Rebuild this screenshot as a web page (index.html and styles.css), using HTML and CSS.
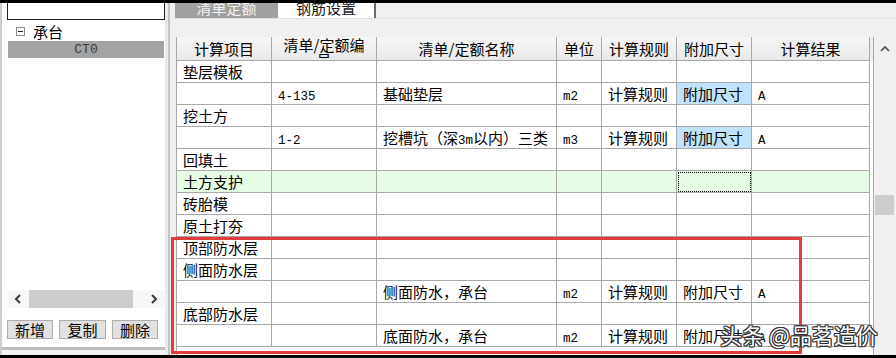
FILE: index.html
```html
<!DOCTYPE html>
<html lang="zh-CN">
<head>
<meta charset="utf-8">
<title>清单定额</title>
<link rel="stylesheet" href="styles.css">
</head>
<body>
<div class="app">
  <aside class="left">
    <div class="search"></div>
    <div class="tree-row"><span class="toggle"><span class="minus"></span></span><span class="tree-label">承台</span></div>
    <div class="tree-item">CT0</div>
    <div class="left-spacer"></div>
    <div class="hscroll">
      <div class="harrow"><svg width="8" height="10" viewBox="0 0 8 10"><polyline points="6,1 2,5 6,9" fill="none" stroke="#3a3a3a" stroke-width="2"/></svg></div>
      <div class="hthumb"></div>
      <div class="htrack"></div>
      <div class="harrow"><svg width="8" height="10" viewBox="0 0 8 10"><polyline points="2,1 6,5 2,9" fill="none" stroke="#3a3a3a" stroke-width="2"/></svg></div>
    </div>
    <div class="btns">
      <div class="btn">新增</div>
      <div class="btn w47">复制</div>
      <div class="btn">删除</div>
    </div>
    <div class="left-foot"></div>
  </aside>
  <div class="splitter"></div>
  <main class="right">
    <div class="tabs">
      <div class="tab active">清单定额</div>
      <div class="tab plain">钢筋设置</div>
    </div>
    <div class="tab-gap"></div>
    <div class="grid-wrap">
      <div class="grid">
        <div class="hd">计算项目</div>
        <div class="hd wrap">清单/定额编号</div>
        <div class="hd">清单/定额名称</div>
        <div class="hd">单位</div>
        <div class="hd">计算规则</div>
        <div class="hd">附加尺寸</div>
        <div class="hd">计算结果</div>

        <div class="c">垫层模板</div><div class="c"></div><div class="c"></div><div class="c"></div><div class="c"></div><div class="c"></div><div class="c"></div>

        <div class="c"></div><div class="c"><span class="mono">4-135</span></div><div class="c">基础垫层</div><div class="c"><span class="mono">m2</span></div><div class="c">计算规则</div><div class="c blue">附加尺寸</div><div class="c"><span class="mono">A</span></div>

        <div class="c">挖土方</div><div class="c"></div><div class="c"></div><div class="c"></div><div class="c"></div><div class="c"></div><div class="c"></div>

        <div class="c"></div><div class="c"><span class="mono">1-2</span></div><div class="c">挖槽坑（深<span class="mono">3m</span>以内）三类</div><div class="c"><span class="mono">m3</span></div><div class="c">计算规则</div><div class="c blue">附加尺寸</div><div class="c"><span class="mono">A</span></div>

        <div class="c">回填土</div><div class="c"></div><div class="c"></div><div class="c"></div><div class="c"></div><div class="c"></div><div class="c"></div>

        <div class="c green">土方支护</div><div class="c green"></div><div class="c green"></div><div class="c green"></div><div class="c green"></div><div class="c green focus"></div><div class="c green"></div>

        <div class="c">砖胎模</div><div class="c"></div><div class="c"></div><div class="c"></div><div class="c"></div><div class="c"></div><div class="c"></div>

        <div class="c">原土打夯</div><div class="c"></div><div class="c"></div><div class="c"></div><div class="c"></div><div class="c"></div><div class="c"></div>

        <div class="c">顶部防水层</div><div class="c"></div><div class="c"></div><div class="c"></div><div class="c"></div><div class="c"></div><div class="c"></div>

        <div class="c">侧面防水层</div><div class="c"></div><div class="c"></div><div class="c"></div><div class="c"></div><div class="c"></div><div class="c"></div>

        <div class="c"></div><div class="c"></div><div class="c">侧面防水，承台</div><div class="c"><span class="mono">m2</span></div><div class="c">计算规则</div><div class="c">附加尺寸</div><div class="c"><span class="mono">A</span></div>

        <div class="c">底部防水层</div><div class="c"></div><div class="c"></div><div class="c"></div><div class="c"></div><div class="c"></div><div class="c"></div>

        <div class="c"></div><div class="c"></div><div class="c">底面防水，承台</div><div class="c"><span class="mono">m2</span></div><div class="c">计算规则</div><div class="c">附加尺寸</div><div class="c"><span class="mono">A</span></div>
      </div>
      <div class="grid-fill"></div>
      <div class="vscroll">
        <div class="varrow"><svg width="10" height="7" viewBox="0 0 10 7"><polyline points="1,6 5,2 9,6" fill="none" stroke="#4a4a4a" stroke-width="1.6"/></svg></div>
        <div class="vthumb"></div>
      </div>
    </div>
  </main>
  <div class="highlight"></div>
  <div class="watermark">头条 @品茗造价</div>
</div>
</body>
</html>
```

FILE: styles.css
```css
html, body {
  margin: 0;
  padding: 0;
}
body {
  background: #000;
  width: 896px;
  height: 358px;
  overflow: hidden;
  font-family: "Noto Sans CJK SC", "Noto Sans", sans-serif;
  font-size: 15px;
  color: #000;
}
.app {
  position: relative;
  margin-top: 3px;
  height: 352px;
  display: flex;
  background: #f0f0f0;
}

/* left panel */
.left {
  width: 165px;
  box-sizing: border-box;
  border-left: 2px solid #cdcdcd;
  background: #fff;
  display: flex;
  flex-direction: column;
}
.search {
  margin-left: 5px;
  width: 158px;
  height: 17px;
  box-sizing: border-box;
  border: 1px solid #1e1e1e;
  border-top: none;
  background: #fff;
}
.tree-row {
  margin-top: 3px;
  height: 17px;
  display: flex;
  align-items: center;
}
.toggle {
  margin-left: 14px;
  width: 9px;
  height: 9px;
  box-sizing: border-box;
  border: 1px solid #8e8e8e;
  background: #fff;
  display: flex;
  align-items: center;
  justify-content: center;
}
.minus {
  width: 5px;
  height: 1px;
  background: #222;
}
.tree-label {
  margin-left: 8px;
  line-height: 17px;
}
.tree-item {
  margin-top: 1px;
  margin-left: 6px;
  width: 156px;
  height: 17px;
  line-height: 17px;
  background: #a3a3a3;
  color: #3a3a3a;
  text-align: center;
  font-family: "Liberation Mono", monospace;
  font-size: 13px;
}
.left-spacer {
  flex: 1;
}
.hscroll {
  margin-left: 5px;
  width: 158px;
  height: 18px;
  display: flex;
  background: #f7f7f7;
}
.harrow {
  width: 22px;
  display: flex;
  align-items: center;
  justify-content: center;
}
.hthumb {
  width: 104px;
  background: #cdcdcd;
}
.htrack {
  width: 10px;
}
.btns {
  margin-top: 12px;
  margin-left: 5px;
  height: 19px;
  display: flex;
  gap: 6px;
}
.btn {
  width: 46px;
  height: 19px;
  box-sizing: border-box;
  border: 1px solid #adadad;
  background: #e1e1e1;
  text-align: center;
  line-height: 17px;
  font-size: 15px;
}
.btn.w47 {
  width: 47px;
}
.left-foot {
  margin-top: 8px;
  height: 8px;
  border-top: 3px solid #bcbcbc;
  box-sizing: border-box;
  background: #f2f2f2;
}

.splitter {
  width: 7px;
  background: linear-gradient(to right, #ebebeb 0, #ebebeb 3px, #c4c4c4 3px, #c4c4c4 5px, #efefef 5px);
}

/* right pane */
.right {
  flex: 1;
  display: flex;
  flex-direction: column;
  min-width: 0;
}
.tabs {
  height: 15px;
  margin-left: 3px;
  display: flex;
}
.tab {
  height: 15px;
  overflow: hidden;
  text-align: center;
  line-height: 10px;
  font-size: 15px;
}
.tab.active {
  width: 103px;
  background: #a0a0a0;
  color: #f2f2f2;
}
.tab.plain {
  width: 96px;
  background: #fff;
  color: #1a1a1a;
  border-right: 2px solid #6a6a6a;
}
.tab-gap {
  height: 19px;
  box-sizing: border-box;
  border-top: 1px solid #e2e2e2;
}
.grid-wrap {
  flex: 1;
  min-height: 0;
  display: flex;
}
.grid {
  margin-left: 4px;
  border-left: 1px solid #a8a8a8;
  background: #fff;
  display: grid;
  grid-template-columns: 95px 105px 180px 45px 75px 75px 118px;
  grid-template-rows: 24px;
  grid-auto-rows: 22px;
  align-content: start;
  overflow: hidden;
}
.hd {
  box-sizing: border-box;
  border-right: 1px solid #a8a8a8;
  border-bottom: 1px solid #a8a8a8;
  background: linear-gradient(#f6f6f6, #e9e9e9);
  text-align: center;
  line-height: 23px;
  white-space: nowrap;
  overflow: hidden;
}
.hd.wrap {
  white-space: normal;
  line-height: 15px;
  padding: 0 5px;
}
.c {
  box-sizing: border-box;
  border-right: 1px solid #a8a8a8;
  border-bottom: 1px solid #a8a8a8;
  padding: 0 6px;
  line-height: 21px;
  white-space: nowrap;
  overflow: hidden;
}
.mono {
  font-family: "Liberation Mono", monospace;
  font-size: 12.5px;
}
.blue {
  background: #c0e2fa;
}
.green {
  background: #e6fce5;
}
.focus {
  outline: 1px dotted #000;
  outline-offset: -2px;
}
.grid-fill {
  width: 4px;
  box-sizing: border-box;
  border-right: 1px solid #a8a8a8;
  background: linear-gradient(#eeeeee 0, #eeeeee 24px, #fff 24px);
}
.vscroll {
  width: 22px;
  background: #f0f0f0;
  display: flex;
  flex-direction: column;
}
.varrow {
  height: 22px;
  display: flex;
  align-items: center;
  justify-content: center;
}
.vthumb {
  margin-top: 136px;
  margin-left: 1px;
  width: 19px;
  height: 20px;
  background: #cdcdcd;
}

/* overlays */
.highlight {
  position: absolute;
  left: 171px;
  top: 234px;
  width: 631px;
  height: 117px;
  box-sizing: border-box;
  border: 3px solid #e23d3d;
  pointer-events: none;
}
.watermark {
  position: absolute;
  left: 720px;
  top: 318px;
  font-size: 22px;
  line-height: 26px;
  color: #fff;
  white-space: nowrap;
  text-shadow: 1px 0 0 #333, -1px 0 0 #333, 0 1px 0 #333, 0 -1px 0 #333, 1px 1px 0 #333, -1px -1px 0 #333, 1px -1px 0 #333, -1px 1px 0 #333;
}
```
